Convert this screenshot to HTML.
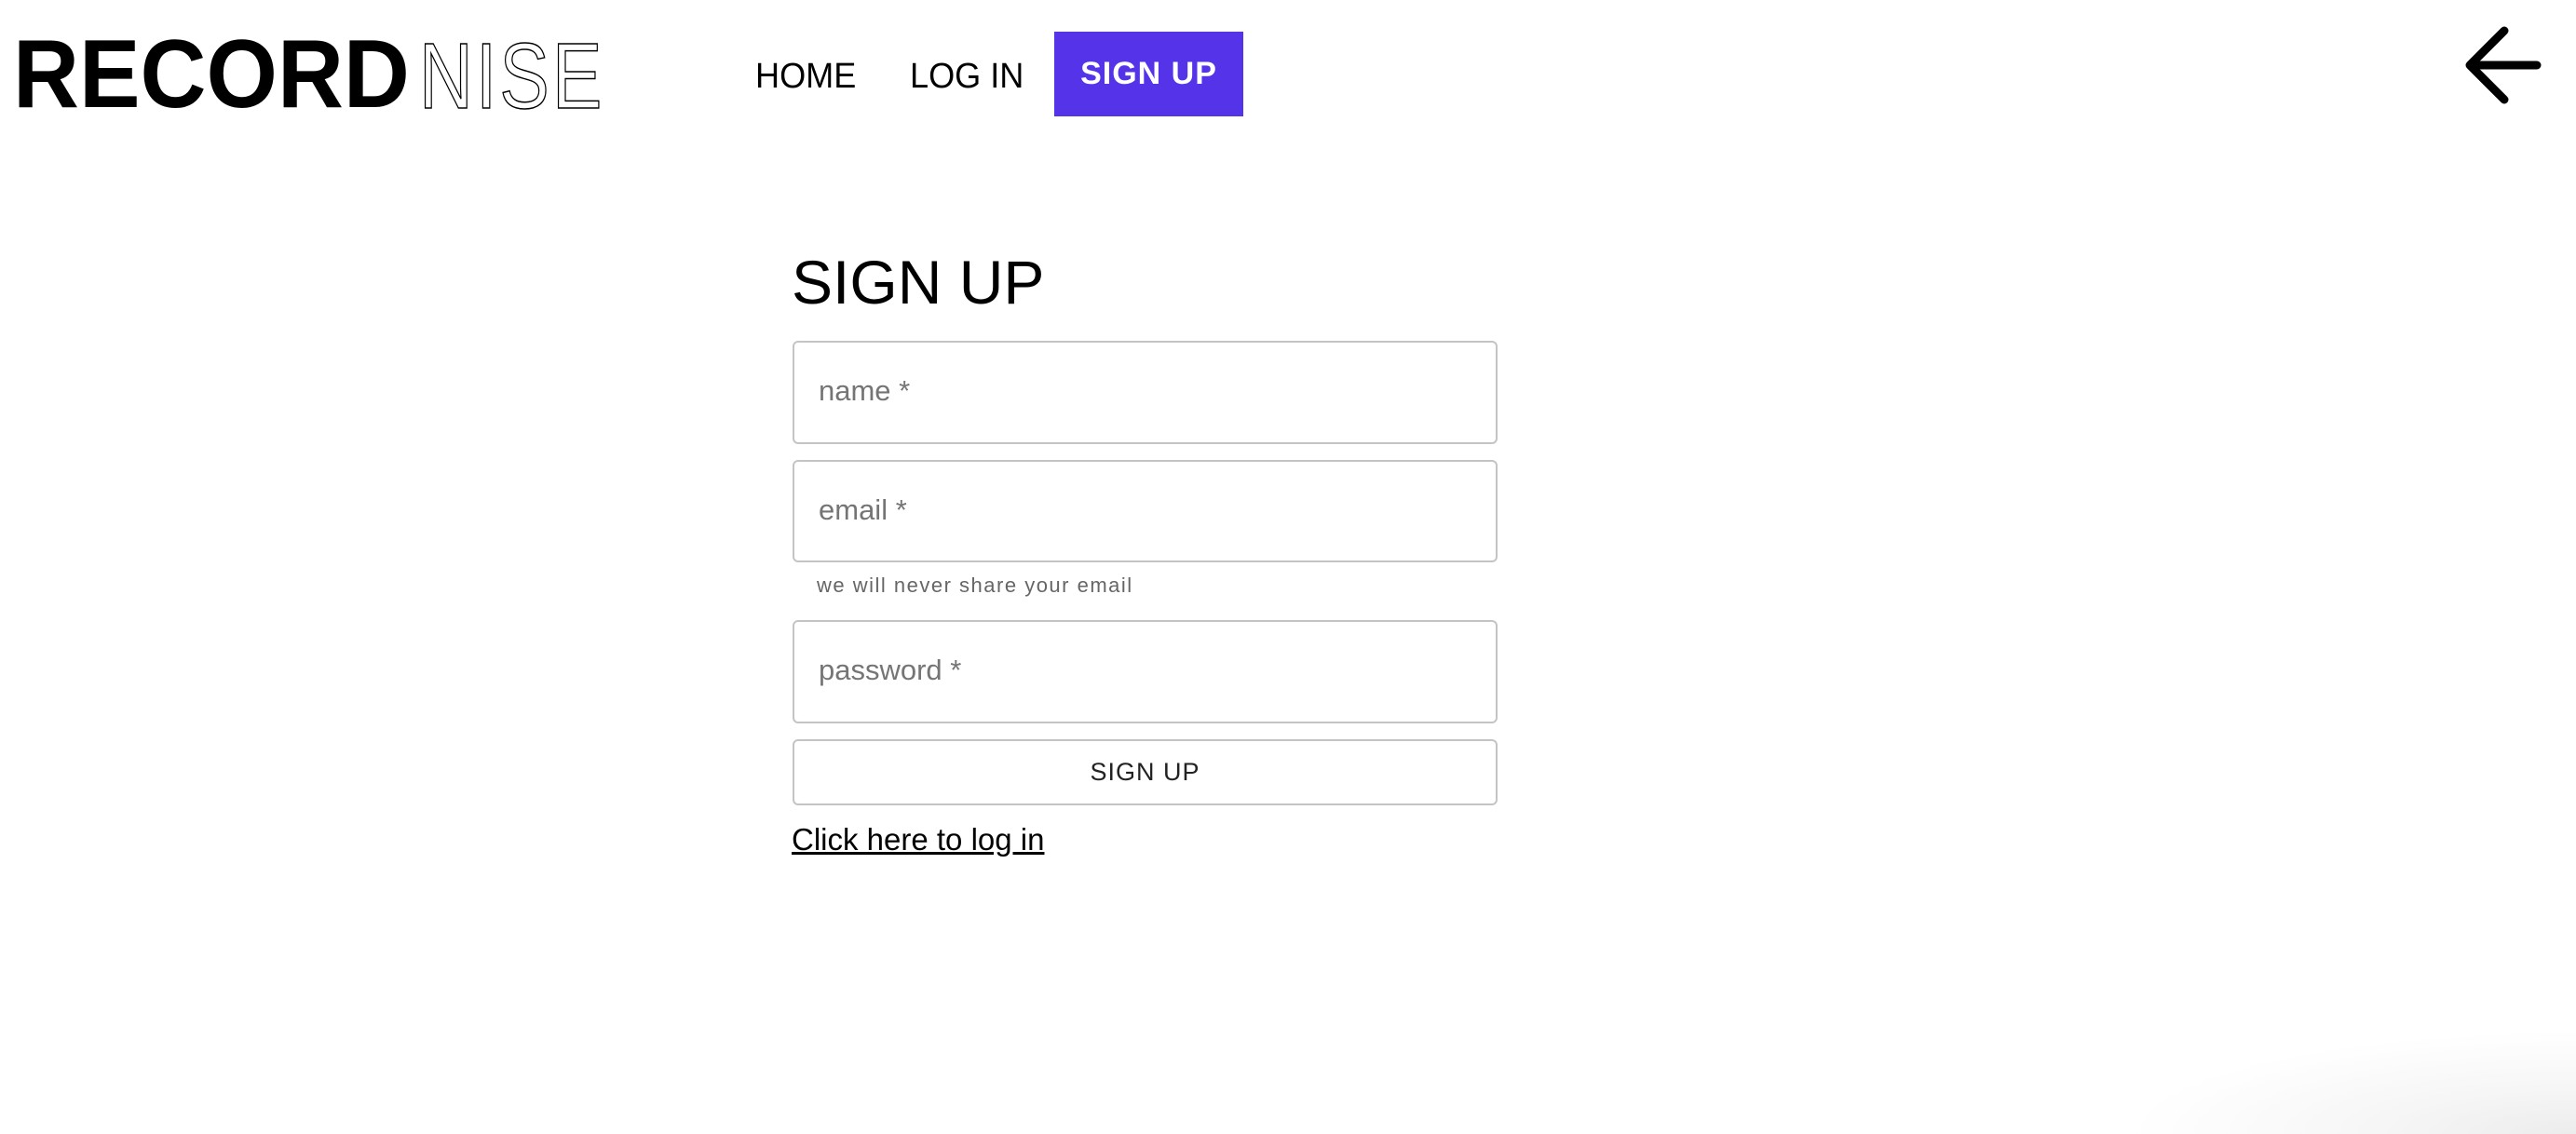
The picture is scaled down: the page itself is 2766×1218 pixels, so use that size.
<!DOCTYPE html>
<html><head><meta charset="utf-8"><style>
html,body{margin:0;padding:0;}
body{width:2766px;height:1218px;position:relative;overflow:hidden;background:#fff;font-family:"Liberation Sans",sans-serif;
background:radial-gradient(ellipse 480px 110px at 2766px 1218px,#ececec 0%,#f6f6f6 45%,rgba(255,255,255,0) 100%),#fff;}
.abs{position:absolute;white-space:nowrap;}
.box{position:absolute;left:851px;width:757px;border:2px solid #c4c4c4;border-radius:6px;box-sizing:border-box;}
.ph{position:absolute;left:26px;font-size:31px;color:#757575;}
</style></head><body>
<div class="abs" style="left:14px;top:28px;font-size:104px;font-weight:bold;line-height:104px;transform:scaleX(0.945);transform-origin:left">RECORD</div>
<div class="abs" style="left:450px;top:30px;font-size:100px;font-weight:normal;line-height:104px;color:#fff;-webkit-text-stroke:1.5px #000;transform:scaleX(0.8);transform-origin:left;letter-spacing:4px">NISE</div>
<div class="abs" style="left:811px;top:60px;font-size:38px;line-height:44px;transform:scaleX(0.95);transform-origin:left">HOME</div>
<div class="abs" style="left:977px;top:60px;font-size:38px;line-height:44px;transform:scaleX(0.95);transform-origin:left">LOG IN</div>
<div class="abs" style="left:1132px;top:34px;width:203px;height:91px;background:#5433e8;color:#fff;font-weight:bold;font-size:34px;line-height:91px;text-align:center;letter-spacing:1px">SIGN UP</div>
<svg class="abs" style="left:2640px;top:20px" width="100" height="100" viewBox="2640 20 100 100"><path d="M2724 70H2652M2689 33L2652 70L2689 107" fill="none" stroke="#000" stroke-width="9" stroke-linecap="round" stroke-linejoin="round"/></svg>
<div class="abs" style="left:850px;top:265px;font-size:66px;line-height:76px;">SIGN UP</div>
<div class="box" style="top:366px;height:111px"><span class="ph" style="top:34px">name *</span></div>
<div class="box" style="top:494px;height:110px"><span class="ph" style="top:34px">email *</span></div>
<div class="abs" style="left:877px;top:616px;font-size:22px;color:#666;letter-spacing:1.5px">we will never share your email</div>
<div class="box" style="top:666px;height:111px"><span class="ph" style="top:34px">password *</span></div>
<div class="box" style="top:794px;height:71px;text-align:center;font-size:27px;line-height:67px;color:#222;letter-spacing:1px">SIGN UP</div>
<div class="abs" style="left:850px;top:881px;font-size:33px;text-decoration:underline;line-height:42px">Click here to log in</div>
</body></html>
